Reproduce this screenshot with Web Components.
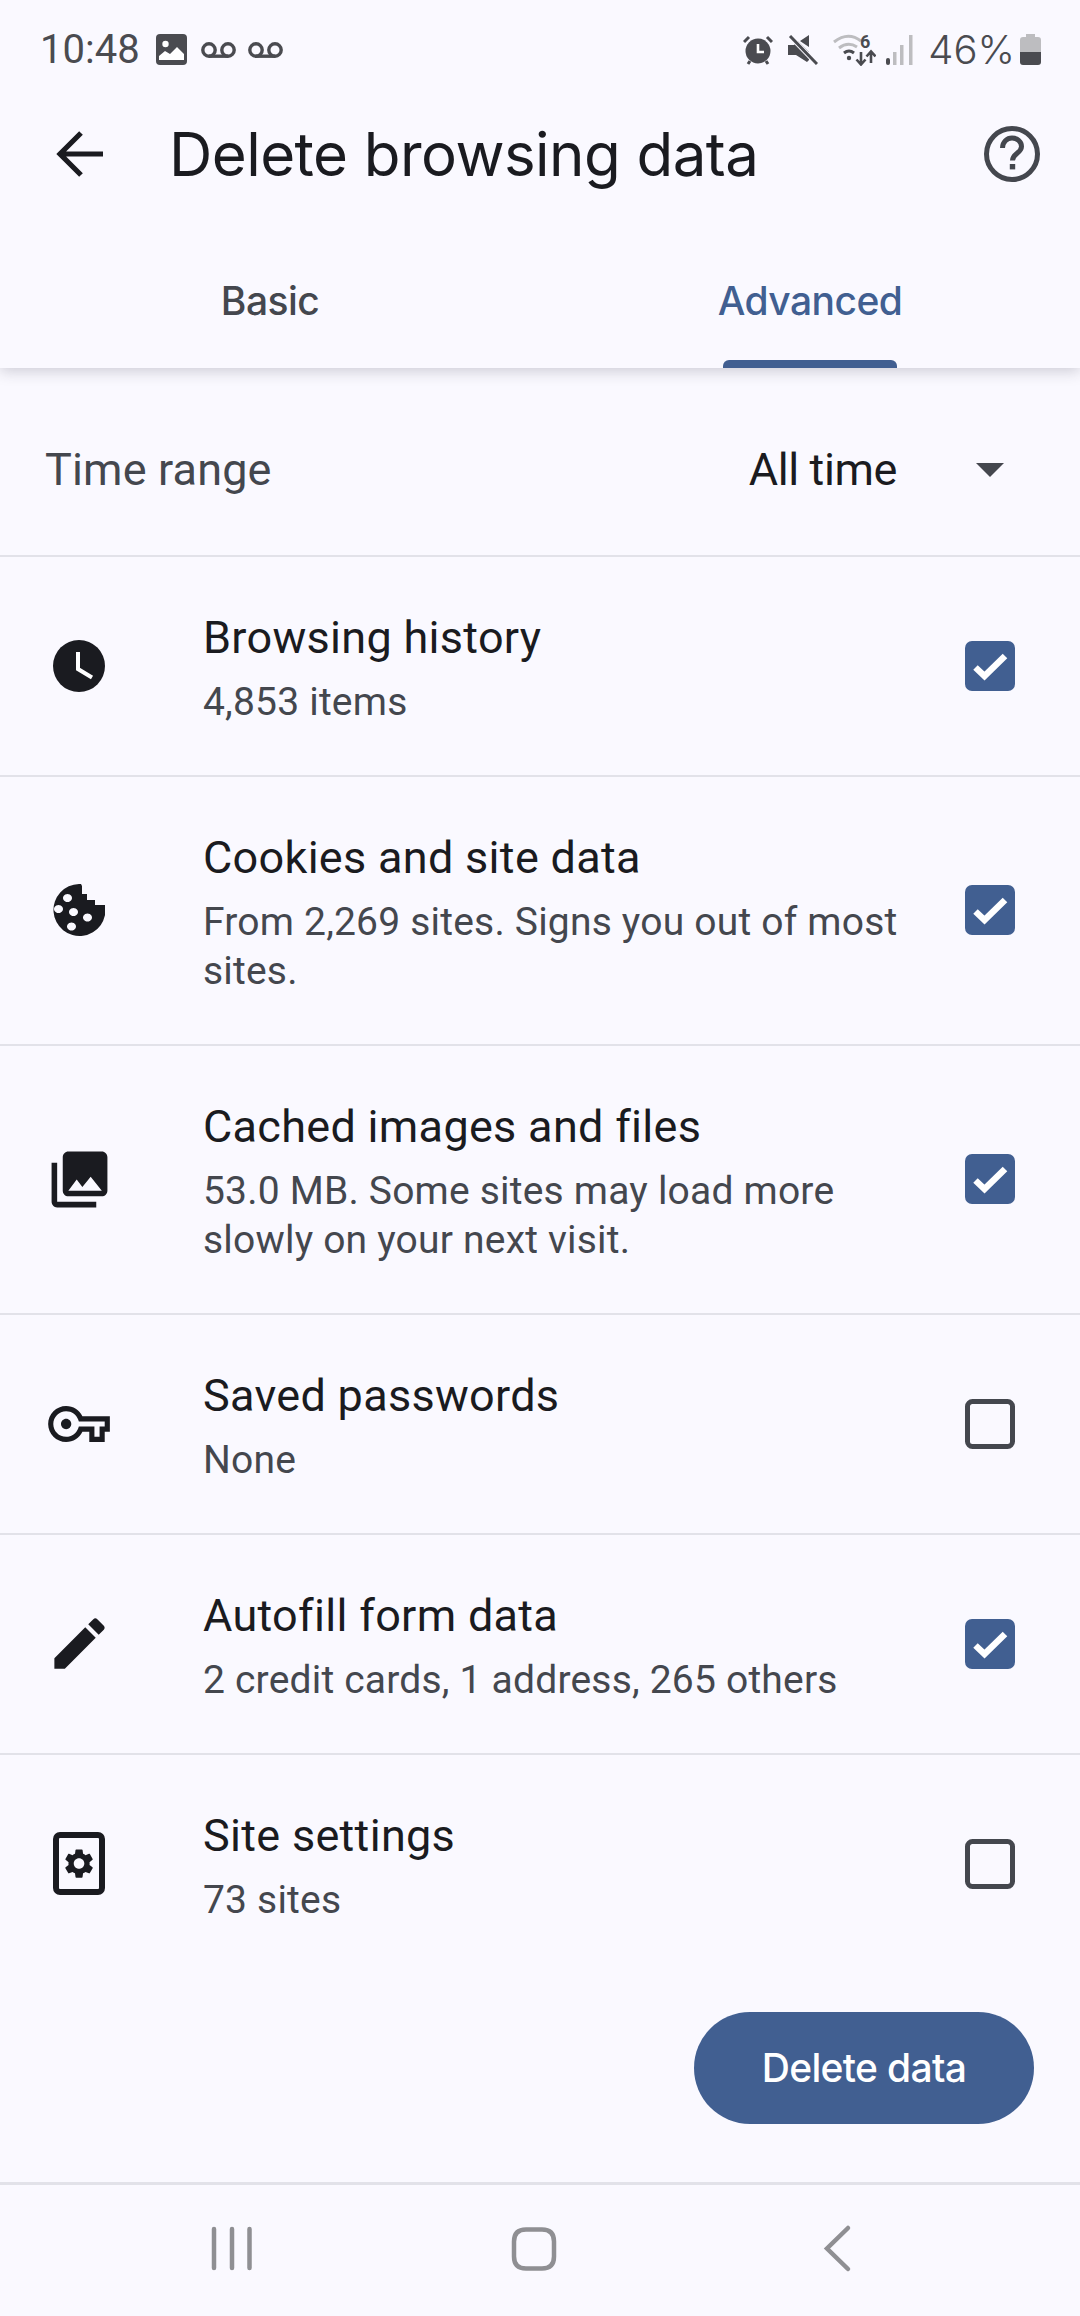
<!DOCTYPE html>
<html lang="en"><head><meta charset="utf-8"><title>Delete browsing data</title>
<style>
html,body{margin:0;padding:0;background:#faf9ff}
body{font-family:Roboto,"Liberation Sans",sans-serif;width:1080px;height:2316px;overflow:hidden}
</style></head><body>
<template id="t-page"><style>
:host{display:flex;flex-direction:column;height:2316px;background:#faf9ff;color:#1a1b20}
main{flex:1;display:flex;flex-direction:column;min-height:0}
</style><slot name="head"></slot><main><slot></slot></main><slot name="nav"></slot></template>

<template id="t-status"><style>
:host{display:flex;align-items:center;justify-content:space-between;height:98px;padding:1px 39px 0 40px;box-sizing:border-box;color:#4a4b50;font:400 40px/1.2 Roboto,sans-serif}
.g{display:flex;align-items:center}
.p{font:300 40px/1.2 Inter,sans-serif;margin-left:15px}
svg{display:block}
</style>
<div class="g"><span>10:48</span>
<svg style="margin-left:16px" width="31" height="31" viewBox="0 0 31 31"><rect width="31" height="31" rx="4" fill="#4a4b50"/><circle cx="9.500" cy="10" r="3.200" fill="#fff"/><path d="M3 26v-4l6-5 5 3 7-7 7 7v6z" fill="#fff"/></svg>
<svg style="margin-left:14px" width="35" height="16" viewBox="0 0 35 16" fill="none" stroke="#4a4b50" stroke-width="3.400"><circle cx="8" cy="8" r="6.200"/><circle cx="27" cy="8" r="6.200"/><path d="M8 14.200h19"/></svg>
<svg style="margin-left:12px" width="35" height="16" viewBox="0 0 35 16" fill="none" stroke="#4a4b50" stroke-width="3.400"><circle cx="8" cy="8" r="6.200"/><circle cx="27" cy="8" r="6.200"/><path d="M8 14.200h19"/></svg>
</div>
<div class="g">
<svg width="30" height="30" viewBox="0 0 30 30"><circle cx="15" cy="16" r="12.500" fill="#4a4b50"/><path d="M15 9v8h6" fill="none" stroke="#fff" stroke-width="2.600"/><path d="M1 7l5-5M29 7l-5-5M5 29l2-3M25 29l-2-3" stroke="#4a4b50" stroke-width="3" fill="none"/></svg>
<svg style="margin-left:15px" width="30" height="30" viewBox="0 0 30 30"><path d="M0 10h6l4-4 11 11v8l-2 2L8 20H0zM12 6l9-6v12z" fill="#4a4b50"/><path d="M3 2l26 27" stroke="#faf9ff" stroke-width="5"/><path d="M2 1l27 28" stroke="#4a4b50" stroke-width="3"/></svg>
<svg style="margin:0 0 6px 15px" width="43" height="38" viewBox="0 -6 43 38" fill="none"><path d="M1 8Q15-3 28 7M6 14Q15 7 24 13" stroke="#bdbdc0" stroke-width="3"/><path d="M11 19q5-4 10 0" stroke="#4a4b50" stroke-width="3"/><circle cx="16" cy="24" r="2.200" fill="#4a4b50"/><text x="27" y="14" font-family="Roboto,sans-serif" font-size="18" font-weight="700" fill="#4a4b50">6</text><path d="M28 18v12M23.500 25.500l4.500 5 4.500-5M38 29V18M33.500 22.500l4.500-5 4.500 5" stroke="#4a4b50" stroke-width="2.600"/></svg>
<svg style="margin-left:10px" width="27" height="30" viewBox="0 0 27 30"><rect x="0" y="23" width="4" height="7" rx="2" fill="#4a4b50"/><rect x="7" y="17" width="3.500" height="13" fill="#bdbdc0"/><rect x="14" y="10" width="3.500" height="20" fill="#bdbdc0"/><rect x="23" y="0" width="3.500" height="30" fill="#bdbdc0"/></svg>
<span class="p">46%</span>
<svg style="margin-left:5px" width="21" height="31" viewBox="0 0 21 31"><path d="M6 0h9v3h3a3 3 0 0 1 3 3v13H0V6a3 3 0 0 1 3-3h3z" fill="#bdbdc0"/><path d="M0 18h21v10a3 3 0 0 1-3 3H3a3 3 0 0 1-3-3z" fill="#4a4b50"/></svg>
</div></template>

<template id="t-toolbar"><style>
:host{display:flex;align-items:center;height:112px;padding:0 39px 0 54px;font:400 60px/1.2 Inter,sans-serif;color:#1a1b20;letter-spacing:-.55px}
.t{flex:1;margin-left:63px;white-space:nowrap}
svg{display:block}
</style>
<svg width="52" height="52" viewBox="0 0 52 52"><path d="M49 26H8M27 5 6 26l21 21" fill="none" stroke="#1a1b20" stroke-width="5.200"/></svg>
<div class="t"><slot></slot></div>
<svg width="58" height="58" viewBox="0 0 58 58"><circle cx="29" cy="29" r="25.500" fill="none" stroke="#44474e" stroke-width="5"/><path d="M19.500 23c0-6 4.500-10 9.500-10s9.500 3.500 9.500 8.500c0 6.500-9 7-9 14" fill="none" stroke="#44474e" stroke-width="5"/><rect x="26.800" y="39" width="5.400" height="5.400" fill="#44474e"/></svg>
</template>

<template id="t-tabs"><style>
:host{display:flex;height:158px;position:relative;z-index:2;background:#faf9ff;box-shadow:0 3px 14px rgba(40,40,60,.22);clip-path:inset(0 0 -30px 0)}
</style><slot></slot></template>

<template id="t-tab"><style>
:host{flex:1;display:flex;flex-direction:column;align-items:center;height:158px;font:500 39px/1.2 Inter,sans-serif;color:#44474e;letter-spacing:-.55px;box-sizing:border-box;padding-top:68px}
:host([active]){color:#415f91}
i{display:none;width:174px;height:8px;background:#415f91;border-radius:6px 6px 0 0;margin-top:auto}
:host([active]) i{display:block}
</style><slot></slot><i></i></template>

<template id="t-range"><style>
:host{display:flex;align-items:center;padding:17px 0 0 45px;box-sizing:border-box;font:400 45px/1.2 Roboto,sans-serif;border-bottom:2px solid #e2e2e9;color:#44474e;height:189px;letter-spacing:.15px}
.v{margin-left:auto;color:#1a1b20;letter-spacing:-.4px}
svg{display:block;margin:0 76px 0 79px}
</style><slot></slot><span class="v"><slot name="value"></slot></span><svg width="28" height="14" viewBox="0 0 28 14"><path d="M0 0h28L14 14z" fill="#44474e"/></svg></template>

<template id="t-row"><style>
:host{display:flex;align-items:center;box-sizing:border-box;padding:51px 65px 48px 0;border-bottom:2px solid #e2e2e9}
:host([last]){border-bottom:0}
.i{width:158px;flex:none;display:flex;justify-content:center;align-items:center;margin-bottom:4px}
.x{flex:1;margin-left:45px;min-width:0}
.a{font:400 45px/60px Roboto,sans-serif;color:#1a1b20;letter-spacing:.3px}
.b{font:400 39px/49px Roboto,sans-serif;color:#44474e;margin-top:10px;letter-spacing:.2px}
</style><div class="i"><slot name="icon"></slot></div><div class="x"><div class="a"><slot name="title"></slot></div><div class="b"><slot></slot></div></div><slot name="box"></slot></template>

<template id="t-check"><style>
:host{display:block;width:50px;height:50px;flex:none;margin:0 0 4px 40px}
svg{display:block}
</style><svg id="s" width="50" height="50" viewBox="0 0 50 50"></svg></template>

<template id="t-foot"><style>
:host{display:flex;justify-content:flex-end;margin-top:auto;padding:0 46px 58px 0}
div{width:340px;height:112px;border-radius:56px;background:#415f91;color:#fff;display:flex;align-items:center;justify-content:center;font:500 39px/1.2 Inter,sans-serif;letter-spacing:-.65px}
</style><div><slot></slot></div></template>

<template id="t-nav"><style>
:host{display:block;height:134px;box-sizing:border-box;border-top:3px solid #e2e2e9}
svg{display:block}
</style><svg width="1080" height="131" viewBox="0 2185 1080 131" fill="none" stroke="#8f8f93" stroke-width="4.500" stroke-linecap="round"><path d="M214 2229v39M232 2229v39M249.500 2229v39"/><path d="M526 2229.500h16q12 0 12 12v15q0 12-12 12h-16q-12 0-12-12v-15q0-12 12-12z"/><path d="M848 2228l-21 20.500 21 20.500"/></svg></template>

<app-page>
 <div slot="head">
 <status-bar></status-bar>
 <app-toolbar>Delete browsing data</app-toolbar>
 <tab-strip><tab-item>Basic</tab-item><tab-item active>Advanced</tab-item></tab-strip>
 </div>
 <time-range>Time range<span slot="value">All time</span></time-range>

 <data-row><svg slot="icon" width="52" height="52" viewBox="0 0 52 52"><circle cx="26" cy="26" r="26" fill="#1a1b20"/><path d="M25 12v17l14 8.500" fill="none" stroke="#fff" stroke-width="4"/></svg><span slot="title">Browsing history</span>4,853 items<check-box slot="box" checked></check-box></data-row>

 <data-row><svg slot="icon" width="52" height="52" viewBox="0 0 52 52"><path fill-rule="evenodd" fill="#1a1b20" d="M26 0h2l1 2v8h5v6h8v5h10a26 26 0 1 1-26-21zM19 14a4.500 4 0 1 0 0 .01zM10 25a4.500 4 0 1 0 0 .01zM25 28a4.500 4 0 1 0 0 .01zM39 33.500a4.500 4 0 1 0 0 .01zM23 42.500a4.500 4 0 1 0 0 .01z"/></svg><span slot="title">Cookies and site data</span>From 2,269 sites. Signs you out of most sites.<check-box slot="box" checked></check-box></data-row>

 <data-row><svg slot="icon" width="67" height="67" viewBox="0 0 24 24"><path fill="#1a1b20" d="M22 16V4c0-1.100-.9-2-2-2H8c-1.100 0-2 .9-2 2v12c0 1.100.9 2 2 2h12c1.100 0 2-.9 2-2zm-11-4l2.030 2.710L16 11l4 5H8l3-4zM2 6v14c0 1.100.9 2 2 2h14v-2H4V6H2z"/></svg><span slot="title">Cached images and files</span>53.0 MB. Some sites may load more slowly on your next visit.<check-box slot="box" checked></check-box></data-row>

 <data-row><svg slot="icon" width="62" height="36" viewBox="0 5 24 14"><path fill-rule="evenodd" fill="#1a1b20" d="M22 19h-6v-4h-2.680c-1.140 2.420-3.600 4-6.320 4-3.860 0-7-3.140-7-7s3.140-7 7-7c2.720 0 5.170 1.580 6.320 4H24v6h-2v4zm-4-2h2v-4h2v-2H11.940l-.23-.67C11.010 8.340 9.110 7 7 7c-2.760 0-5 2.240-5 5s2.240 5 5 5c2.110 0 4.010-1.340 4.710-3.330l.23-.67H18v4zM7 14c-1.100 0-2-.9-2-2s.9-2 2-2 2 .9 2 2-.9 2-2 2z"/></svg><span slot="title">Saved passwords</span>None<check-box slot="box"></check-box></data-row>

 <data-row><svg slot="icon" width="67" height="67" viewBox="0 0 24 24"><path fill="#1a1b20" d="M3 17.250V21h3.750L17.810 9.940l-3.750-3.750L3 17.250zM20.710 7.040c.39-.39.39-1.020 0-1.410l-2.340-2.340c-.39-.39-1.020-.39-1.410 0l-1.830 1.830 3.750 3.750 1.830-1.830z"/></svg><span slot="title">Autofill form data</span>2 credit cards, 1 address, 265 others<check-box slot="box" checked></check-box></data-row>

 <data-row last><svg slot="icon" width="52" height="63" viewBox="0 0 52 63"><rect x="3" y="3" width="46" height="57" rx="4" fill="none" stroke="#1a1b20" stroke-width="6"/><g transform="translate(8.400 13.900) scale(1.470)"><path fill="#1a1b20" d="M19.140 12.940c.04-.3.060-.61.060-.94 0-.32-.02-.64-.07-.94l2.030-1.580c.18-.14.230-.41.120-.61l-1.920-3.320c-.12-.22-.37-.29-.59-.22l-2.390.96c-.5-.38-1.030-.7-1.620-.94l-.36-2.540c-.04-.24-.24-.41-.48-.41h-3.840c-.24 0-.43.170-.47.41l-.36 2.540c-.59.240-1.130.570-1.620.94l-2.390-.96c-.22-.08-.47 0-.59.220L2.740 8.870c-.12.210-.08.470.12.610l2.030 1.580c-.05.3-.09.630-.09.940s.02.640.07.940l-2.030 1.580c-.18.140-.23.410-.12.610l1.920 3.320c.12.220.37.290.59.220l2.390-.96c.5.380 1.030.7 1.620.94l.36 2.540c.05.240.24.410.48.410h3.840c.24 0 .44-.17.47-.41l.36-2.540c.59-.24 1.130-.56 1.620-.94l2.390.96c.22.080.47 0 .59-.22l1.920-3.320c.12-.22.070-.47-.12-.61l-2.010-1.580zM12 15.600c-1.980 0-3.600-1.620-3.600-3.600s1.620-3.600 3.600-3.600 3.600 1.620 3.600 3.600-1.620 3.600-3.600 3.600z"/></g></svg><span slot="title">Site settings</span>73 sites<check-box slot="box"></check-box></data-row>

 <delete-footer>Delete data</delete-footer>
 <nav-bar slot="nav"></nav-bar>
</app-page>

<script>
const mk=(tag,id,extra)=>customElements.define(tag,class extends HTMLElement{
  constructor(){super();this.attachShadow({mode:'open'}).appendChild(document.getElementById(id).content.cloneNode(true));}
  connectedCallback(){extra&&extra(this)}
});
mk('app-page','t-page');
mk('status-bar','t-status');
mk('app-toolbar','t-toolbar');
mk('tab-strip','t-tabs');
mk('tab-item','t-tab');
mk('time-range','t-range');
mk('data-row','t-row');
mk('check-box','t-check',el=>{
  const s=el.shadowRoot.getElementById('s');
  s.innerHTML=el.hasAttribute('checked')
   ?'<rect width="50" height="50" rx="7" fill="#415f91"/><path d="M10.500 26.500l9 8.500L40 15" fill="none" stroke="#fff" stroke-width="6.500"/>'
   :'<rect x="2.500" y="2.500" width="45" height="45" rx="5" fill="none" stroke="#44474e" stroke-width="5"/>';
});
mk('delete-footer','t-foot');
mk('nav-bar','t-nav');
</script>
</body></html>
